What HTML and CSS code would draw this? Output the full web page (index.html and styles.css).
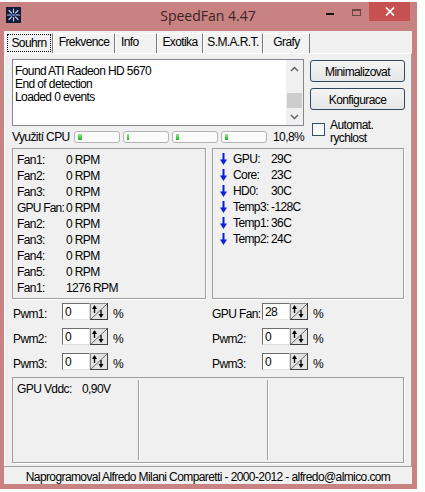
FILE: index.html
```html
<!DOCTYPE html>
<html>
<head>
<meta charset="utf-8">
<title>SpeedFan 4.47</title>
<link rel="stylesheet" href="styles.css">
</head>
<body>
<div class="window">
  <div class="titlebar">
    <div class="tb-left">
      <svg class="appicon" width="15" height="16" viewBox="0 0 15 16">
        <rect x="0" y="0" width="15" height="16" fill="#151a38"/>
        <g stroke="#b8d0f0" stroke-width="1.2" stroke-linecap="round">
          <line x1="7.5" y1="2" x2="7.5" y2="5.5"/>
          <line x1="7.5" y1="10.5" x2="7.5" y2="14"/>
          <line x1="1.5" y1="8" x2="5" y2="8"/>
          <line x1="10" y1="8" x2="13.5" y2="8"/>
          <line x1="3" y1="3.5" x2="5.5" y2="6"/>
          <line x1="9.5" y1="10" x2="12" y2="12.5"/>
          <line x1="12" y1="3.5" x2="9.5" y2="6"/>
          <line x1="5.5" y1="10" x2="3" y2="12.5"/>
        </g>
        <circle cx="7.5" cy="8" r="1.3" fill="#5a8ad8"/>
      </svg>
    </div>
    <div class="title">SpeedFan 4.47</div>
    <div class="controls">
      <div class="ctl min"><span class="g-min"></span></div>
      <div class="ctl max"><span class="g-max"></span></div>
      <div class="ctl close">
        <svg width="10" height="9" viewBox="0 0 10 9"><g stroke="#fff" stroke-width="1.7"><line x1="1" y1="0.5" x2="9" y2="8.5"/><line x1="9" y1="0.5" x2="1" y2="8.5"/></g></svg>
      </div>
    </div>
  </div>
  <div class="client">
    <div class="tabs">
      <div class="tab t1 active"><span class="focus">Souhrn</span></div>
      <div class="tab t2">Frekvence</div>
      <div class="tab t3">Info</div>
      <div class="tab t4">Exotika</div>
      <div class="tab t5">S.M.A.R.T.</div>
      <div class="tab t6">Grafy</div>
    </div>
    <div class="panel">
      <div class="top">
        <div class="leftcol">
          <div class="log">
            <div class="log-text">
              <div>Found ATI Radeon HD 5670</div>
              <div>End of detection</div>
              <div>Loaded 0 events</div>
            </div>
            <div class="vscroll">
              <div class="sb-btn"><svg width="9" height="6" viewBox="0 0 9 6"><polyline points="1,5 4.5,1.5 8,5" fill="none" stroke="#606060" stroke-width="1.5"/></svg></div>
              <div class="sb-space"></div>
              <div class="sb-thumb"></div>
              <div class="sb-btn"><svg width="9" height="6" viewBox="0 0 9 6"><polyline points="1,1 4.5,4.5 8,1" fill="none" stroke="#606060" stroke-width="1.5"/></svg></div>
            </div>
          </div>
          <div class="cpu">
            <span class="cpu-label">Využití CPU</span>
            <div class="bar"><i style="width:4px"></i></div>
            <div class="bar"><i style="width:2px"></i></div>
            <div class="bar"><i style="width:3px"></i></div>
            <div class="bar"><i style="width:3px"></i></div>
            <span class="cpu-val">10,8%</span>
          </div>
        </div>
        <div class="rightcol">
          <button class="btn">Minimalizovat</button>
          <button class="btn">Konfigurace</button>
          <div class="check">
            <span class="cbox"></span>
            <span class="clabel">Automat.<br>rychlost</span>
          </div>
        </div>
      </div>

      <div class="boxes">
        <div class="box fans">
          <div class="row"><span class="lbl">Fan1:</span><span>0 RPM</span></div>
          <div class="row"><span class="lbl">Fan2:</span><span>0 RPM</span></div>
          <div class="row"><span class="lbl">Fan3:</span><span>0 RPM</span></div>
          <div class="row"><span class="lbl">GPU Fan:</span><span>0 RPM</span></div>
          <div class="row"><span class="lbl">Fan2:</span><span>0 RPM</span></div>
          <div class="row"><span class="lbl">Fan3:</span><span>0 RPM</span></div>
          <div class="row"><span class="lbl">Fan4:</span><span>0 RPM</span></div>
          <div class="row"><span class="lbl">Fan5:</span><span>0 RPM</span></div>
          <div class="row"><span class="lbl">Fan1:</span><span>1276 RPM</span></div>
        </div>
        <div class="box temps">
          <div class="row"><svg class="arrow" width="7" height="12" viewBox="0 0 7 12"><rect x="2.5" y="0" width="2" height="8" fill="#0b1fd4"/><polygon points="0,6.5 7,6.5 3.5,12" fill="#0b1fd4"/></svg><span class="tlbl">GPU:</span><span>29C</span></div>
          <div class="row"><svg class="arrow" width="7" height="12" viewBox="0 0 7 12"><rect x="2.5" y="0" width="2" height="8" fill="#0b1fd4"/><polygon points="0,6.5 7,6.5 3.5,12" fill="#0b1fd4"/></svg><span class="tlbl">Core:</span><span>23C</span></div>
          <div class="row"><svg class="arrow" width="7" height="12" viewBox="0 0 7 12"><rect x="2.5" y="0" width="2" height="8" fill="#0b1fd4"/><polygon points="0,6.5 7,6.5 3.5,12" fill="#0b1fd4"/></svg><span class="tlbl">HD0:</span><span>30C</span></div>
          <div class="row"><svg class="arrow" width="7" height="12" viewBox="0 0 7 12"><rect x="2.5" y="0" width="2" height="8" fill="#0b1fd4"/><polygon points="0,6.5 7,6.5 3.5,12" fill="#0b1fd4"/></svg><span class="tlbl">Temp3:</span><span>-128C</span></div>
          <div class="row"><svg class="arrow" width="7" height="12" viewBox="0 0 7 12"><rect x="2.5" y="0" width="2" height="8" fill="#0b1fd4"/><polygon points="0,6.5 7,6.5 3.5,12" fill="#0b1fd4"/></svg><span class="tlbl">Temp1:</span><span>36C</span></div>
          <div class="row"><svg class="arrow" width="7" height="12" viewBox="0 0 7 12"><rect x="2.5" y="0" width="2" height="8" fill="#0b1fd4"/><polygon points="0,6.5 7,6.5 3.5,12" fill="#0b1fd4"/></svg><span class="tlbl">Temp2:</span><span>24C</span></div>
        </div>
      </div>

      <div class="pwm">
        <div class="pwmcol left">
          <div class="prow"><span class="plbl">Pwm1:</span><div class="spin"><span class="val">0</span><svg class="spinbtn" width="18" height="17" viewBox="0 0 18 17"><rect x="0.5" y="0.5" width="17" height="16" fill="#e3e3e3" stroke="#8a8a8a"/><line x1="17.5" y1="0" x2="17.5" y2="17" stroke="#404040"/><line x1="0" y1="16.5" x2="18" y2="16.5" stroke="#404040"/><line x1="1" y1="16" x2="17" y2="1" stroke="#6a6a6a"/><line x1="4.5" y1="3.5" x2="4.5" y2="10" stroke="#000" stroke-width="1.3"/><polygon points="2,6 4.5,2 7,6" fill="#000"/><line x1="11" y1="7" x2="11" y2="13" stroke="#000" stroke-width="1.3"/><polygon points="8.5,11 11,15 13.5,11" fill="#000"/></svg></div><span class="pct">%</span></div>
          <div class="prow"><span class="plbl">Pwm2:</span><div class="spin"><span class="val">0</span><svg class="spinbtn" width="18" height="17" viewBox="0 0 18 17"><rect x="0.5" y="0.5" width="17" height="16" fill="#e3e3e3" stroke="#8a8a8a"/><line x1="17.5" y1="0" x2="17.5" y2="17" stroke="#404040"/><line x1="0" y1="16.5" x2="18" y2="16.5" stroke="#404040"/><line x1="1" y1="16" x2="17" y2="1" stroke="#6a6a6a"/><line x1="4.5" y1="3.5" x2="4.5" y2="10" stroke="#000" stroke-width="1.3"/><polygon points="2,6 4.5,2 7,6" fill="#000"/><line x1="11" y1="7" x2="11" y2="13" stroke="#000" stroke-width="1.3"/><polygon points="8.5,11 11,15 13.5,11" fill="#000"/></svg></div><span class="pct">%</span></div>
          <div class="prow"><span class="plbl">Pwm3:</span><div class="spin"><span class="val">0</span><svg class="spinbtn" width="18" height="17" viewBox="0 0 18 17"><rect x="0.5" y="0.5" width="17" height="16" fill="#e3e3e3" stroke="#8a8a8a"/><line x1="17.5" y1="0" x2="17.5" y2="17" stroke="#404040"/><line x1="0" y1="16.5" x2="18" y2="16.5" stroke="#404040"/><line x1="1" y1="16" x2="17" y2="1" stroke="#6a6a6a"/><line x1="4.5" y1="3.5" x2="4.5" y2="10" stroke="#000" stroke-width="1.3"/><polygon points="2,6 4.5,2 7,6" fill="#000"/><line x1="11" y1="7" x2="11" y2="13" stroke="#000" stroke-width="1.3"/><polygon points="8.5,11 11,15 13.5,11" fill="#000"/></svg></div><span class="pct">%</span></div>
        </div>
        <div class="pwmcol right">
          <div class="prow"><span class="plbl">GPU Fan:</span><div class="spin"><span class="val">28</span><svg class="spinbtn" width="18" height="17" viewBox="0 0 18 17"><rect x="0.5" y="0.5" width="17" height="16" fill="#e3e3e3" stroke="#8a8a8a"/><line x1="17.5" y1="0" x2="17.5" y2="17" stroke="#404040"/><line x1="0" y1="16.5" x2="18" y2="16.5" stroke="#404040"/><line x1="1" y1="16" x2="17" y2="1" stroke="#6a6a6a"/><line x1="4.5" y1="3.5" x2="4.5" y2="10" stroke="#000" stroke-width="1.3"/><polygon points="2,6 4.5,2 7,6" fill="#000"/><line x1="11" y1="7" x2="11" y2="13" stroke="#000" stroke-width="1.3"/><polygon points="8.5,11 11,15 13.5,11" fill="#000"/></svg></div><span class="pct">%</span></div>
          <div class="prow"><span class="plbl">Pwm2:</span><div class="spin"><span class="val">0</span><svg class="spinbtn" width="18" height="17" viewBox="0 0 18 17"><rect x="0.5" y="0.5" width="17" height="16" fill="#e3e3e3" stroke="#8a8a8a"/><line x1="17.5" y1="0" x2="17.5" y2="17" stroke="#404040"/><line x1="0" y1="16.5" x2="18" y2="16.5" stroke="#404040"/><line x1="1" y1="16" x2="17" y2="1" stroke="#6a6a6a"/><line x1="4.5" y1="3.5" x2="4.5" y2="10" stroke="#000" stroke-width="1.3"/><polygon points="2,6 4.5,2 7,6" fill="#000"/><line x1="11" y1="7" x2="11" y2="13" stroke="#000" stroke-width="1.3"/><polygon points="8.5,11 11,15 13.5,11" fill="#000"/></svg></div><span class="pct">%</span></div>
          <div class="prow"><span class="plbl">Pwm3:</span><div class="spin"><span class="val">0</span><svg class="spinbtn" width="18" height="17" viewBox="0 0 18 17"><rect x="0.5" y="0.5" width="17" height="16" fill="#e3e3e3" stroke="#8a8a8a"/><line x1="17.5" y1="0" x2="17.5" y2="17" stroke="#404040"/><line x1="0" y1="16.5" x2="18" y2="16.5" stroke="#404040"/><line x1="1" y1="16" x2="17" y2="1" stroke="#6a6a6a"/><line x1="4.5" y1="3.5" x2="4.5" y2="10" stroke="#000" stroke-width="1.3"/><polygon points="2,6 4.5,2 7,6" fill="#000"/><line x1="11" y1="7" x2="11" y2="13" stroke="#000" stroke-width="1.3"/><polygon points="8.5,11 11,15 13.5,11" fill="#000"/></svg></div><span class="pct">%</span></div>
        </div>
      </div>

      <div class="box volt">
        <div class="vcol c1"><span class="vlbl">GPU Vddc:</span><span>0,90V</span></div>
        <div class="vcol c2"></div>
        <div class="vcol c3"></div>
      </div>
    </div>
    <div class="status">Naprogramoval Alfredo Milani Comparetti - 2000-2012 - alfredo@almico.com</div>
  </div>
</div>
</body>
</html>
```

FILE: styles.css
```css
* { box-sizing: border-box; }

body {
  margin: 0;
  background: #ffffff;
  font-family: "Liberation Sans", Arial, sans-serif;
  font-size: 12px;
  letter-spacing: -0.6px;
  color: #000;
}

.window {
  margin-top: 2px;
  width: 417px;
  height: 487px;
  background: #c98282;
  padding: 0 5px 5px 4px;
}

.titlebar {
  height: 29px;
  display: grid;
  grid-template-columns: 1fr auto 1fr;
}

.appicon {
  display: block;
  margin: 5px 0 0 2px;
}

.title {
  font-family: "Open Sans", sans-serif;
  font-size: 14px;
  letter-spacing: 0;
  line-height: 28px;
  color: #3b2424;
}

.controls {
  justify-self: end;
  display: flex;
  margin-right: 2px;
}

.ctl {
  width: 26px;
  height: 19px;
  display: flex;
  justify-content: center;
}

.g-min {
  display: block;
  width: 8px;
  height: 2px;
  margin-top: 11px;
  background: #1e1414;
}

.g-max {
  display: block;
  width: 9px;
  height: 7px;
  margin-top: 7px;
  border: 1px solid #6a4848;
  border-top-width: 2px;
}

.ctl.close {
  width: 41px;
  background: #c75050;
  align-items: center;
}

.client {
  height: 453px;
  background: #f0f0f0;
}

.tabs {
  display: flex;
  height: 22px;
  padding: 2px 0 0 1px;
}

.tab {
  height: 20px;
  border-top: 1px solid #fff;
  border-left: 1px solid #fff;
  border-right: 1px solid #7a7a7a;
  line-height: 17px;
  text-align: center;
  white-space: nowrap;
  background: #f2f2f2;
}

.t1 { width: 48px; padding: 0 1px 1px 1px; }
.t2 { width: 62px; }
.t3 { width: 42px; text-align: left; padding-left: 5px; }
.t4 { width: 46px; }
.t5 { width: 60px; }
.t6 { width: 47px; }

.focus {
  display: block;
  height: 18px;
  border: 1px dotted #000;
  line-height: 16px;
}

.panel {
  height: 413px;
  border-top: 1px solid #fff;
  border-left: 1px solid #fff;
  border-right: 1px solid #a0a0a0;
  padding: 5px 0 2px 7px;
}

.top {
  display: flex;
  gap: 6px;
}

.leftcol {
  width: 292px;
}

.log {
  height: 67px;
  border: 1px solid #828790;
  background: #fff;
  display: flex;
}

.log-text {
  flex: 1;
  padding: 5px 0 0 2px;
  line-height: 13px;
}

.vscroll {
  width: 17px;
  background: #f0f0f0;
  display: flex;
  flex-direction: column;
}

.sb-btn {
  height: 17px;
  display: flex;
  align-items: center;
  justify-content: center;
}

.sb-space { height: 16px; }

.sb-thumb {
  height: 15px;
  margin: 0 1px;
  background: #cdcdcd;
}

.cpu {
  margin-top: 5px;
  height: 12px;
  display: flex;
  align-items: flex-start;
  gap: 3px;
  line-height: 12px;
}

.cpu-label {
  width: 59px;
  white-space: nowrap;
}

.bar {
  width: 46px;
  height: 12px;
  border: 1px solid #b4b4b4;
  border-radius: 3px;
  background: #fbfbfb;
  padding: 2px 0 2px 3px;
}

.bar i {
  display: block;
  height: 100%;
  background: linear-gradient(#8ee88e, #1fb41f);
}

.cpu-val {
  margin-left: 3px;
}

.rightcol {
  width: 95px;
  padding-top: 1px;
}

.btn {
  display: block;
  width: 95px;
  height: 22px;
  margin: 0 0 6px 0;
  padding: 2px 0 0 0;
  border: 1px solid #30475f;
  border-radius: 3px;
  background: linear-gradient(#f4f4f4, #e6e6e6);
  font-family: inherit;
  font-size: 12px;
  letter-spacing: inherit;
  line-height: 18px;
  color: #000;
  text-align: center;
}

.check {
  margin-top: 9px;
  display: flex;
  align-items: flex-start;
}

.cbox {
  width: 13px;
  height: 13px;
  margin: 4px 5px 0 2px;
  border: 1px solid #3a4f66;
  background: linear-gradient(#f3f3f3, #ffffff);
}

.clabel {
  line-height: 13px;
}

.boxes {
  margin-top: 3px;
  display: flex;
  gap: 6px;
}

.box {
  border: 1px solid #a0a0a0;
  box-shadow: 1px 1px 0 #ffffff;
}

.fans {
  width: 194px;
  height: 151px;
  padding: 3px 0 0 4px;
}

.temps {
  width: 192px;
  height: 151px;
  padding: 2px 0 0 7px;
}

.row {
  display: flex;
  align-items: center;
  height: 16px;
  line-height: 16px;
  white-space: nowrap;
}

.lbl { width: 49px; }

.fans .row:nth-child(4) .lbl { letter-spacing: -0.8px; }

.arrow {
  display: block;
  margin-right: 6px;
}

.tlbl { width: 38px; }

.pwm {
  margin-top: 4px;
  display: flex;
}

.pwmcol {
  display: flex;
  flex-direction: column;
  gap: 8px;
}

.pwmcol.left {
  width: 200px;
  padding-left: 1px;
}

.prow {
  display: flex;
  height: 17px;
  align-items: flex-start;
}

.plbl {
  width: 49px;
  padding-top: 3px;
  line-height: 17px;
  white-space: nowrap;
}

.pwmcol.right .plbl { width: 50px; }

.spin {
  display: flex;
  height: 17px;
}

.val {
  width: 28px;
  height: 17px;
  background: #fff;
  border: 1px solid;
  border-color: #6d6d6d #e0e0e0 #e0e0e0 #6d6d6d;
  padding: 1px 0 0 2px;
  line-height: 14px;
}

.spinbtn { display: block; }

.pct {
  margin-left: 5px;
  padding-top: 3px;
  line-height: 16px;
}

.volt {
  margin-top: 7px;
  width: 392px;
  height: 86px;
  display: grid;
  grid-template-columns: 125px 129px 1fr;
}

.vcol {
  margin: 2px 0;
}

.c1 {
  padding: 1px 0 0 4px;
  line-height: 16px;
  display: flex;
  align-items: flex-start;
  white-space: nowrap;
}

.vlbl { width: 65px; }

.c2, .c3 {
  border-left: 1px solid #a0a0a0;
  box-shadow: inset 1px 0 0 #ffffff;
}

.status {
  height: 18px;
  border-top: 1px solid #a0a0a0;
  padding-top: 4px;
  line-height: 13px;
  text-align: center;
  white-space: nowrap;
}
```
